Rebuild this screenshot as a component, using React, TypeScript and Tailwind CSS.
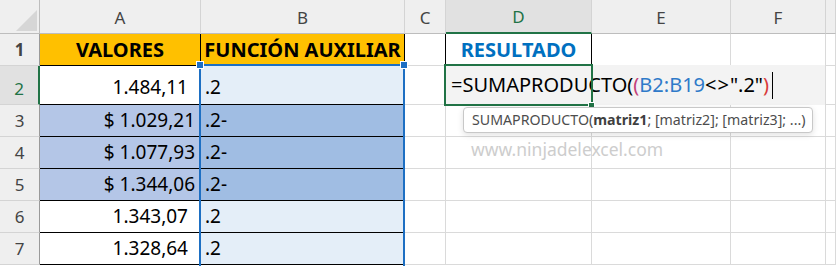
import React from "react";

const FONT = "font-['Noto_Sans',sans-serif]";

type CellProps = { w: string; cls?: string; children?: React.ReactNode };

function Cell({ w, cls = "", children }: CellProps) {
  return (
    <div className={`${w} shrink-0 h-full border-r border-b overflow-hidden whitespace-nowrap ${cls}`}>
      {children}
    </div>
  );
}

// grid line colour for empty cells
const GRID = "border-[#dadada] bg-white";

function RowHead({ n, active }: { n: number; active?: boolean }) {
  return (
    <Cell
      w="w-[40px]"
      cls={`flex items-end justify-center pb-[3px] text-[17px] border-b-[#d4d4d4] ${
        active
          ? "bg-[#e1e1e1] text-[#217346] border-r-2 border-r-[#217346]"
          : "bg-[#efefef] text-[#444] border-r-[#9a9a9a]"
      }`}
    >
      {n}
    </Cell>
  );
}

function ColHead({ w, label, active }: { w: string; label: string; active?: boolean }) {
  return (
    <Cell
      w={w}
      cls={`flex items-center justify-center pt-[2px] text-[17px] border-r-[#d4d4d4] ${
        active
          ? "bg-[#e1e1e1] text-[#217346] border-b-2 border-b-[#217346]"
          : "bg-[#efefef] text-[#444] border-b-[#bdbdbd]"
      }`}
    >
      {label}
    </Cell>
  );
}

// empty cells for C..G
function Rest() {
  return (
    <>
      <Cell w="w-[41px]" cls={GRID} />
      <Cell w="w-[146px]" cls={GRID} />
      <Cell w="w-[139px]" cls={GRID} />
      <Cell w="w-[95px]" cls={GRID} />
      <Cell w="flex-1" cls={GRID} />
    </>
  );
}

const ROWS = [
  { n: 3, a: "$ 1.029,21", b: ".2-", hi: true },
  { n: 4, a: "$ 1.077,93", b: ".2-", hi: true },
  { n: 5, a: "$ 1.344,06", b: ".2-", hi: true },
  { n: 6, a: "1.343,07", b: ".2", hi: false },
  { n: 7, a: "1.328,64", b: ".2", hi: false },
];

export default function App() {
  return (
    <div className={`relative w-[836px] h-[266px] overflow-hidden bg-white text-black ${FONT}`}>
      {/* column headers */}
      <div className="flex h-[34px]">
        <Cell w="w-[40px]" cls="bg-[#efefef] border-r-[#bdbdbd] border-b-[#bdbdbd] relative">
          <svg className="absolute left-[16px] top-[10px]" width="21" height="21" viewBox="0 0 21 21">
            <polygon points="0,21 21,0 21,21" fill="#d6d6d6" />
          </svg>
        </Cell>
        <ColHead w="w-[161px]" label="A" />
        <ColHead w="w-[204px]" label="B" />
        <ColHead w="w-[41px]" label="C" />
        <ColHead w="w-[146px]" label="D" active />
        <ColHead w="w-[139px]" label="E" />
        <ColHead w="w-[95px]" label="F" />
        <ColHead w="flex-1" label="" />
      </div>

      {/* row 1 */}
      <div className="flex h-[32px] text-[20px] font-bold">
        <RowHead n={1} />
        <Cell w="w-[161px]" cls="bg-[#ffc000] border-black flex items-center justify-center">
          VALORES
        </Cell>
        <Cell w="w-[204px]" cls="bg-[#ffc000] border-black flex items-center justify-center">
          FUNCIÓN AUXILIAR
        </Cell>
        <Cell w="w-[41px]" cls="bg-white border-r-black border-b-[#dadada]" />
        <Cell w="w-[146px]" cls="bg-white border-black flex items-center justify-center text-[#0070c0]">
          RESULTADO
        </Cell>
        <Cell w="w-[139px]" cls={GRID} />
        <Cell w="w-[95px]" cls={GRID} />
        <Cell w="flex-1" cls={GRID} />
      </div>

      {/* row 2 */}
      <div className="flex h-[39px] text-[19px]">
        <RowHead n={2} active />
        <Cell w="w-[161px]" cls="bg-white border-black flex items-end justify-end pr-[12px] pb-[3px]">
          1.484,11
        </Cell>
        <Cell w="w-[204px]" cls="bg-[#e4eef8] border-black flex items-end pl-[4px] pb-[3px]">
          .2
        </Cell>
        <Rest />
      </div>

      {ROWS.map((r) => (
        <div key={r.n} className="flex h-[32px] text-[19px]">
          <RowHead n={r.n} />
          <Cell
            w="w-[161px]"
            cls={`border-black flex items-end justify-end pb-[2px] ${
              r.hi ? "bg-[#b4c6e7] pr-[5px]" : "bg-white pr-[12px]"
            }`}
          >
            {r.a}
          </Cell>
          <Cell
            w="w-[204px]"
            cls={`border-black flex items-end pl-[4px] pb-[2px] ${r.hi ? "bg-[#a0bde3]" : "bg-[#e4eef8]"}`}
          >
            {r.b}
          </Cell>
          <Rest />
        </div>
      ))}

      {/* B2:B19 reference range */}
      <div className="absolute left-[199px] top-[64px] w-[206px] h-[240px] border-2 border-[#1d6fc3]" />
      <div className="absolute left-[196px] top-[61px] w-[8px] h-[8px] bg-[#1d6fc3] border border-white" />
      <div className="absolute left-[400px] top-[61px] w-[8px] h-[8px] bg-[#1d6fc3] border border-white" />

      {/* formula being edited in D2 */}
      <div className="absolute left-[445px] top-[65px] w-[380px] h-[40px] bg-[#f3f3f3] flex items-center pl-[6px] text-[20px] whitespace-nowrap">
        <span>=SUMAPRODUCTO(</span>
        <span className="text-[#c2407a]">(</span>
        <span className="text-[#2f7ac9]">B2:B19</span>
        <span className="tracking-[1px]">&lt;&gt;</span>
        <span>".2"</span>
        <span className="text-[#d93a3a]">)</span>
        <span className="inline-block w-px h-[27px] bg-black ml-[3px]" />
      </div>
      <div className="absolute left-[444px] top-[64px] w-[149px] h-[42px] border-2 border-[#217346]" />
      <div className="absolute left-[588px] top-[102px] w-[7px] h-[7px] bg-[#217346] border border-white" />

      {/* function tooltip */}
      <div className="absolute left-[463px] top-[107px] w-[350px] h-[26px] rounded-[4px] border border-[#c8c8c8] bg-white shadow-[0_2px_6px_rgba(0,0,0,0.12)] flex items-center pl-[8px] text-[14.2px] text-[#4d4d4d] whitespace-nowrap">
        SUMAPRODUCTO(<b className="font-bold text-[#3f3f3f]">matriz1</b>; [matriz2]; [matriz3]; ...)
      </div>

      {/* watermark */}
      <div className="absolute left-[471px] top-[136px] text-[17.5px] text-[#cdcdcd]">
        www.ninjadelexcel.com
      </div>
    </div>
  );
}
